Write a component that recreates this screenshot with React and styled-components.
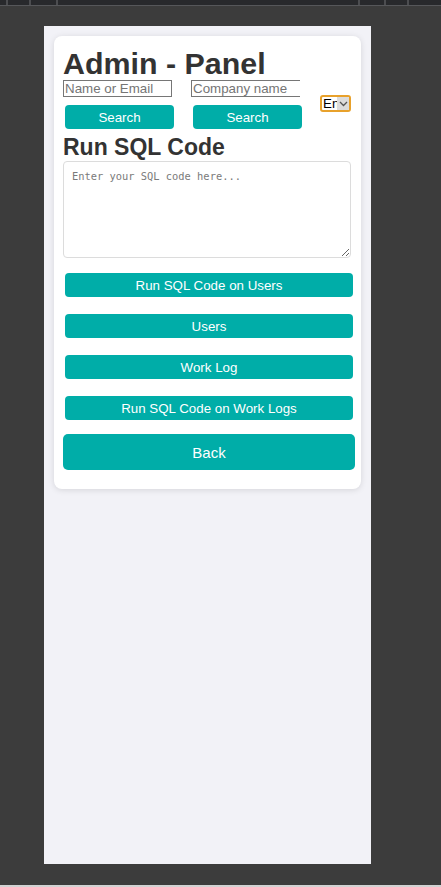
import React from "react";
import styled, { createGlobalStyle } from "styled-components";

const Global = createGlobalStyle`
  html, body { margin: 0; padding: 0; }
  body {
    background: #3c3c3c;
    font-family: "Liberation Sans", Arial, sans-serif;
    width: 441px;
    height: 887px;
    overflow: hidden;
  }
`;

const Shell = styled.div`
  display: flex;
  flex-direction: column;
  height: 887px;
`;

const Ruler = styled.div`
  position: relative;
  height: 5px;
  background: #28292c;
  border-bottom: 1px solid #56575a;
  flex: none;
`;

const Tick = styled.span`
  position: absolute;
  top: 0;
  bottom: 0;
  width: 2px;
  background: #4c4d50;
`;

const Stage = styled.div`
  flex: 1;
  padding: 20px 0 0 44px;
  background: #3c3c3c;
`;

const BottomLine = styled.div`
  height: 2px;
  background: #d2d2d2;
  flex: none;
`;

const Phone = styled.div`
  width: 327px;
  height: 838px;
  background: #f2f2f7;
  padding: 10px;
  box-sizing: border-box;
`;

const Card = styled.div`
  background: #ffffff;
  border-radius: 8px;
  box-shadow: 0 1px 6px rgba(0, 0, 0, 0.12);
  padding: 10px 9px 19px 9px;
  color: #333;
`;

const Title = styled.h1`
  margin: 0;
  font-size: 30.4px;
  font-weight: bold;
  line-height: 34px;
  color: #333;
`;

const SearchRow = styled.div`
  display: flex;
  align-items: center;
  gap: 17px;
`;

const SearchCol = styled.div`
  display: flex;
  flex-direction: column;
  width: 111px;
`;

const TextInput = styled.input`
  box-sizing: border-box;
  width: 109px;
  height: 17px;
  padding: 0 1px;
  margin: 0;
  border: 1px solid #767676;
  ${(p) => (p.$open ? "border-right: none;" : "")}
  font-family: "Liberation Sans", Arial, sans-serif;
  font-size: 13.33px;
  color: #333;
  outline: none;
  &::placeholder { color: #757575; }
`;

const TealButton = styled.button`
  box-sizing: border-box;
  border: none;
  background: #00ada8;
  color: #fff;
  font-family: "Liberation Sans", Arial, sans-serif;
  cursor: pointer;
  padding: 0;
  display: block;
  width: ${(p) => (p.$big ? "292px" : p.$w || "288px")};
  height: ${(p) => (p.$big ? "36px" : "24px")};
  font-size: ${(p) => (p.$big ? "15px" : "13.33px")};
  border-radius: ${(p) => (p.$big ? "5px" : "4px")};
  margin: ${(p) => (p.$big ? "0" : "0 0 0 2px")};
`;

const SearchButton = styled(TealButton)`
  margin: 8px 0 2px 2px;
`;

const LangBox = styled.div`
  display: flex;
  align-items: stretch;
  box-sizing: border-box;
  width: 31px;
  height: 17px;
  border: 2px solid #e8a12b;
  border-radius: 3px;
  margin: 0 0 4px 1px;
  overflow: hidden;
  background: #fff;
`;

const LangText = styled.span`
  width: 14px;
  overflow: hidden;
  font-size: 13.33px;
  line-height: 13px;
  color: #000;
  padding-left: 1px;
  white-space: nowrap;
`;

const Chevron = styled.span`
  flex: 1;
  background: #dcdcdc;
  display: flex;
  align-items: center;
  justify-content: center;
`;

const Subtitle = styled.h2`
  margin: 3px 0 0 0;
  font-size: 23px;
  font-weight: bold;
  line-height: 27px;
  color: #333;
`;

const SqlArea = styled.textarea`
  display: block;
  box-sizing: border-box;
  width: 288px;
  height: 97px;
  margin: 0;
  padding: 8px;
  border: 1px solid #dcdcdc;
  border-radius: 4px;
  font-family: "DejaVu Sans Mono", monospace;
  font-size: 10.4px;
  resize: vertical;
  outline: none;
  &::placeholder { color: #7a7a7a; }
`;

const ActionList = styled.div`
  display: flex;
  flex-direction: column;
  gap: 17px;
  margin-top: 15px;
`;

const BackWrap = styled.div`
  margin-top: 14px;
`;

export default function App() {
  return (
    <Shell>
      <Global />
      <Ruler>
        {[6, 29, 56, 358, 384, 407].map((x) => (
          <Tick key={x} style={{ left: x }} />
        ))}
      </Ruler>
      <Stage>
        <Phone>
          <Card>
            <Title>Admin - Panel</Title>
            <SearchRow>
              <SearchCol>
                <TextInput placeholder="Name or Email" />
                <SearchButton $w="109px">Search</SearchButton>
              </SearchCol>
              <SearchCol>
                <TextInput placeholder="Company name" $open />
                <SearchButton $w="109px">Search</SearchButton>
              </SearchCol>
              <LangBox>
                <LangText>En</LangText>
                <Chevron>
                  <svg width="9" height="6" viewBox="0 0 9 6">
                    <path d="M1 1 L4.5 4.5 L8 1" fill="none" stroke="#555" strokeWidth="1.3" />
                  </svg>
                </Chevron>
              </LangBox>
            </SearchRow>
            <Subtitle>Run SQL Code</Subtitle>
            <SqlArea placeholder="Enter your SQL code here..." />
            <ActionList>
              <TealButton>Run SQL Code on Users</TealButton>
              <TealButton>Users</TealButton>
              <TealButton>Work Log</TealButton>
              <TealButton>Run SQL Code on Work Logs</TealButton>
            </ActionList>
            <BackWrap>
              <TealButton $big>Back</TealButton>
            </BackWrap>
          </Card>
        </Phone>
      </Stage>
      <BottomLine />
    </Shell>
  );
}
